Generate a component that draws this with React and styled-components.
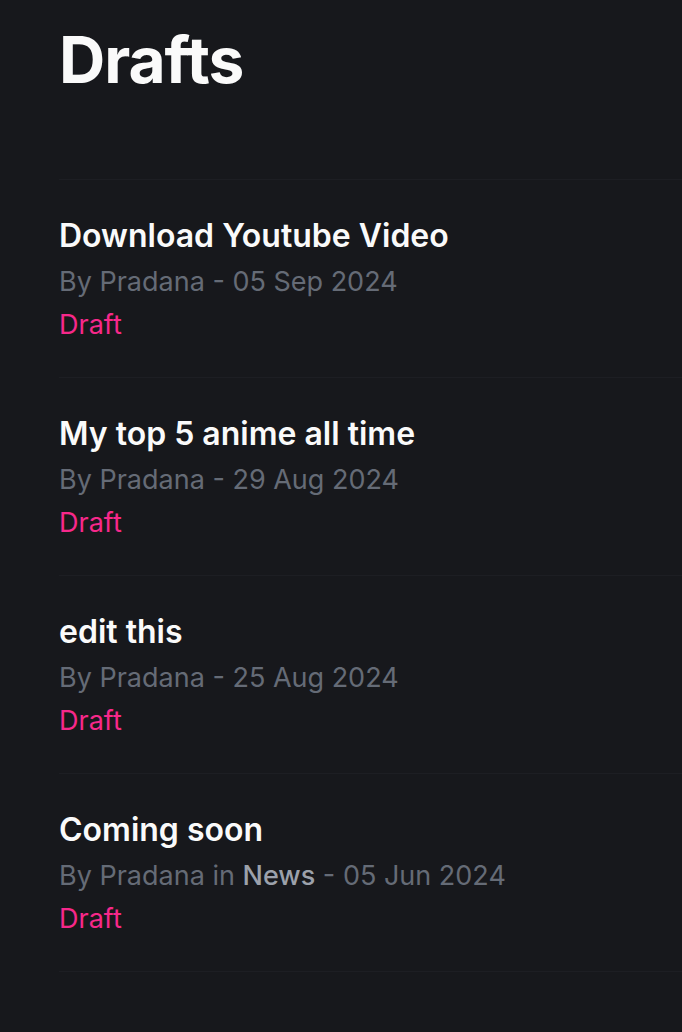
import styled, { createGlobalStyle } from 'styled-components'

const GlobalStyle = createGlobalStyle`
  html, body {
    margin: 0;
    padding: 0;
    background: #17181c;
  }
  body {
    font-family: Inter, "Noto Sans", sans-serif;
    -webkit-font-smoothing: antialiased;
  }
`

const Page = styled.main`
  min-height: 100vh;
  padding: 20px 0 0 59px;
  background: #17181c;
  overflow: hidden;
`

const Heading = styled.h1`
  margin: 0 0 79px;
  font-size: 64px;
  line-height: 80px;
  font-weight: 700;
  letter-spacing: -1px;
  color: #fafafa;
`

const List = styled.ul`
  list-style: none;
  margin: 0;
  padding: 0;
  border-top: 1px solid #1d1e23;
`

const Item = styled.li`
  padding: 34px 0 31px;
  border-bottom: 1px solid #1d1e23;
`

const Title = styled.h2`
  margin: 0 0 3px;
  font-size: 32px;
  line-height: 43px;
  font-weight: 600;
  color: #fafafa;
`

const Meta = styled.p`
  margin: 0;
  font-size: 27px;
  line-height: 43px;
  color: #656b76;
  strong {
    font-weight: 500;
    color: #9ca1ab;
  }
`

const Status = styled.span`
  display: block;
  font-size: 27px;
  line-height: 43px;
  color: #f7288a;
`

const posts = [
  { title: 'Download Youtube Video', date: '05 Sep 2024' },
  { title: 'My top 5 anime all time', date: '29 Aug 2024' },
  { title: 'edit this', date: '25 Aug 2024' },
  { title: 'Coming soon', date: '05 Jun 2024', category: 'News' },
]

const App = () => {
  return (
    <Page>
      <GlobalStyle />
      <Heading>Drafts</Heading>
      <List>
        {posts.map((post) => (
          <Item key={post.title}>
            <Title>{post.title}</Title>
            <Meta>
              By Pradana
              {post.category ? (<> in <strong>{post.category}</strong></>) : null}
              {' '}- {post.date}
            </Meta>
            <Status>Draft</Status>
          </Item>
        ))}
      </List>
    </Page>
  )
}

export default App
